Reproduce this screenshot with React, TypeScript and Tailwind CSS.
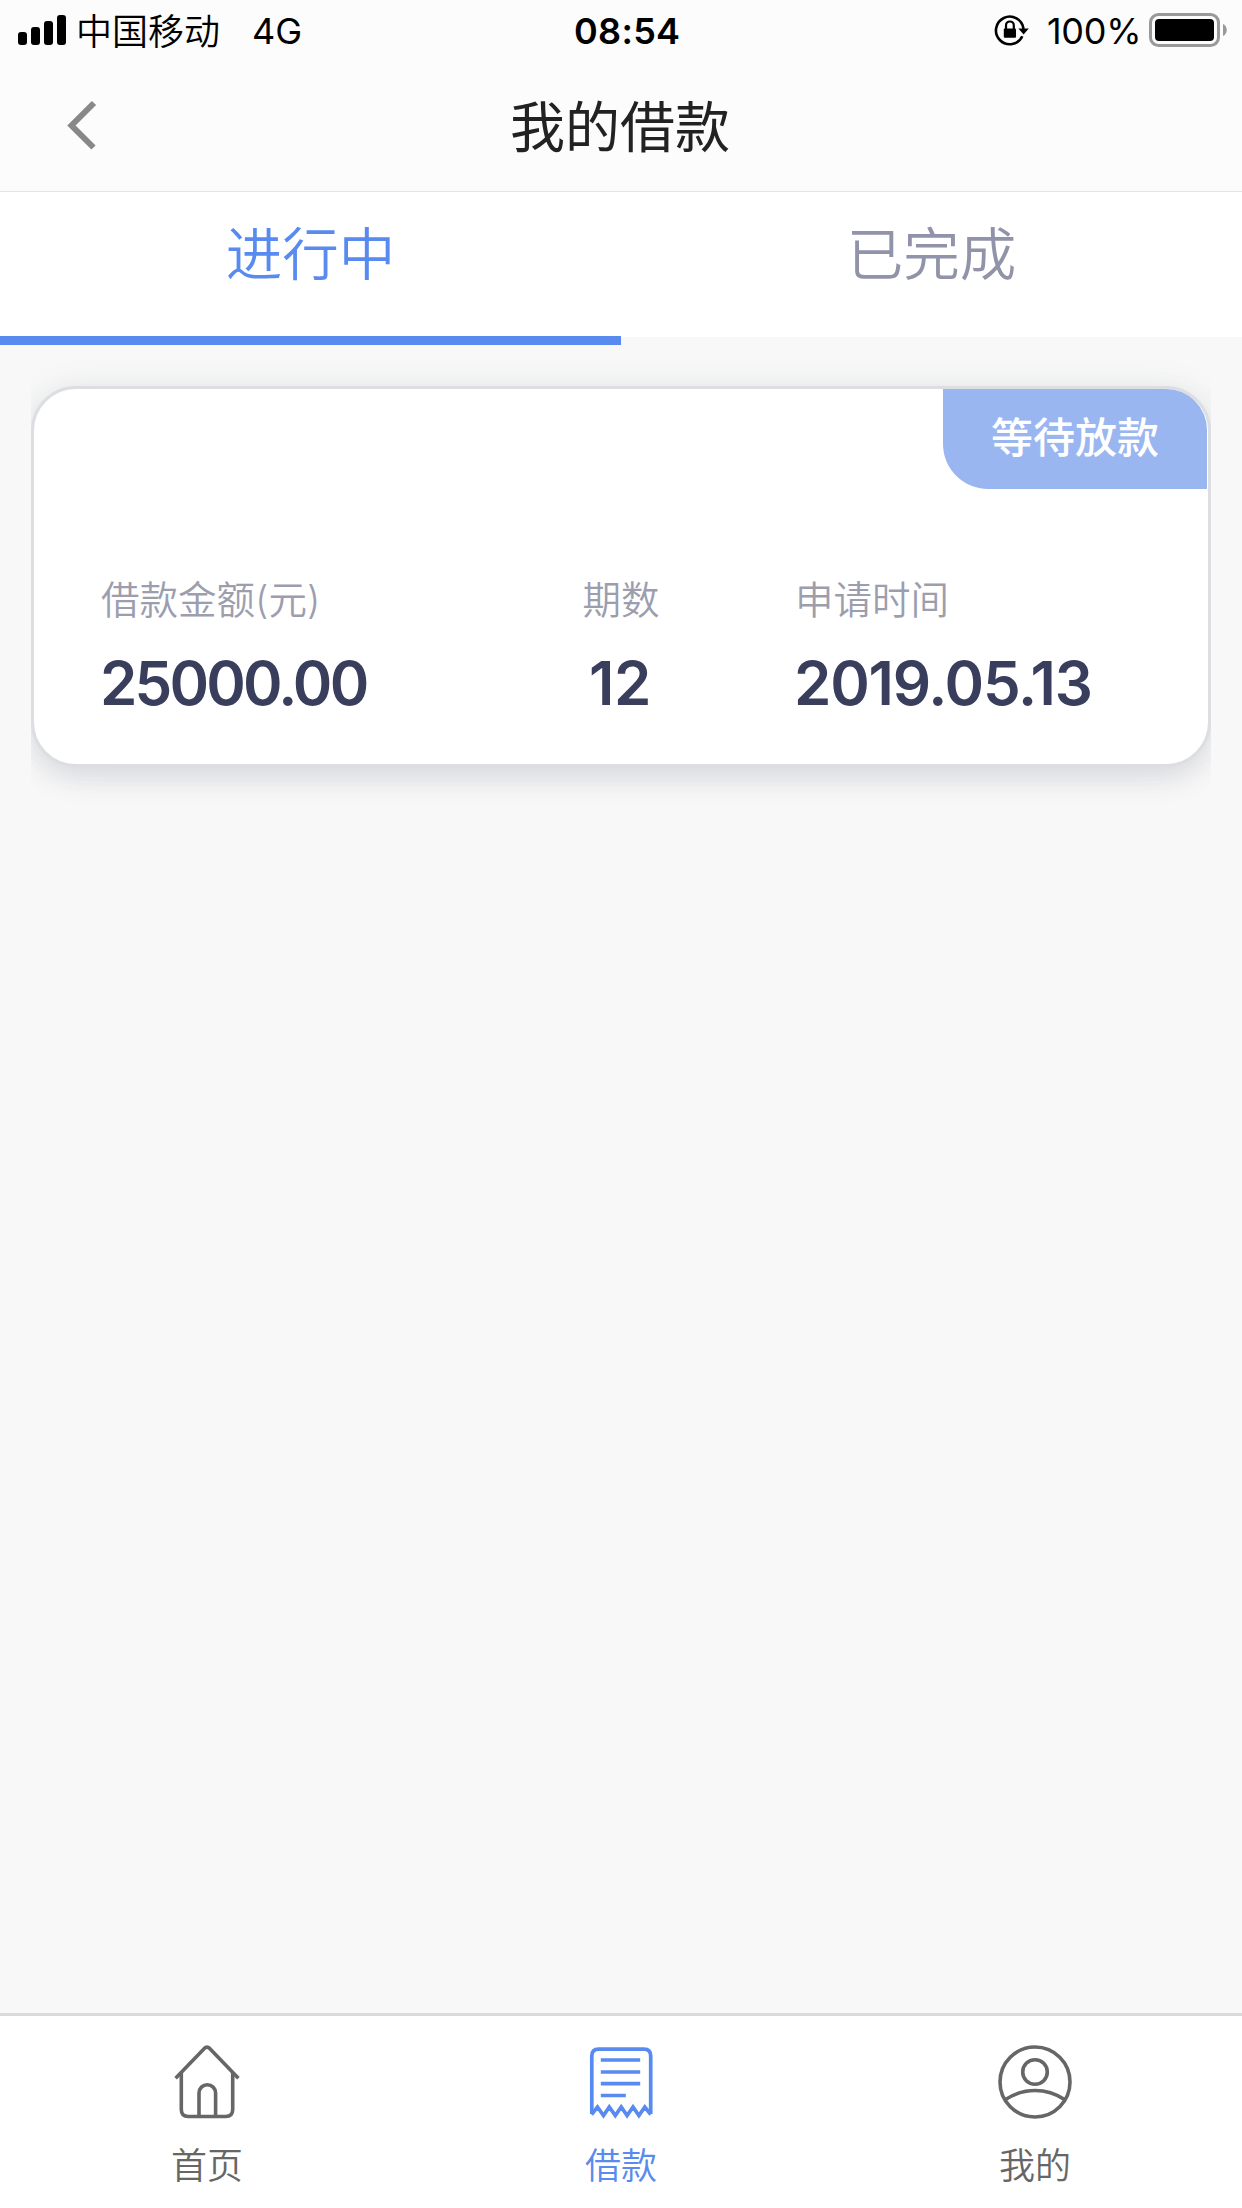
import React from 'react';

const loan = {
  status: '等待放款',
  amount: '25000.00',
  periods: '12',
  date: '2019.05.13',
};

const StatusBar: React.FC = () => (
  <div className="flex h-[62px] w-full items-center text-[36px] leading-[62px] text-black">
    <svg width="50" height="32" viewBox="0 0 50 32" className="ml-[17px] mt-[-2px]">
      <rect x="1" y="18" width="9" height="13" rx="3" />
      <rect x="14" y="13" width="9" height="18" rx="3" />
      <rect x="27" y="7" width="9" height="24" rx="3" />
      <rect x="40" y="1" width="9" height="30" rx="3" />
    </svg>
    <span className="ml-[9px] w-[144px] whitespace-nowrap pt-px font-[350]">中国移动</span>
    <span className="ml-[32px] w-[322px]">4G</span>
    <span className="w-[421px] font-semibold tracking-[0.3px]">08:54</span>
    <svg width="36" height="32" viewBox="0 0 36 32" fill="none" className="ml-[-1px] mt-[-2px]">
      <path d="M28.3 22.2A13.8 13.8 0 1 1 29.5 15" stroke="#000" strokeWidth="2.6" />
      <path d="M24.4 14.6h10.4l-5.2 5.8z" fill="#000" />
      <rect x="9.8" y="14.6" width="12.2" height="9.2" rx="1" fill="#000" />
      <path d="M12 15v-3.6a3.9 3.9 0 0 1 7.8 0V15" stroke="#000" strokeWidth="2.2" />
    </svg>
    <span className="ml-[17px] w-[102px] whitespace-nowrap tracking-[-0.3px]">100%</span>
    <svg width="80" height="36" viewBox="0 0 80 36" fill="none" className="mt-[-2px]">
      <rect x="1.5" y="2.5" width="68" height="31" rx="8" stroke="#999" strokeWidth="3" />
      <rect x="6" y="7" width="59" height="22" rx="4" fill="#000" />
      <path d="M74 12c5 2 5 10 0 12z" fill="#999" />
    </svg>
  </div>
);

const HomeIcon = () => (
  <svg width="78" height="78" viewBox="0 0 78 78" fill="none" stroke="#666" strokeWidth="3.6">
    <path d="M7.6 37.2 36.3 7.4q2.7-2.6 5.4 0l28.7 29.8" />
    <path d="M13.3 32v36.5q0 7 7 7h37.4q7 0 7-7V32" />
    <path d="M31 75.5V52a8.3 8.3 0 0 1 16.6 0v23.5" />
  </svg>
);

const BillIcon = () => (
  <svg width="78" height="78" viewBox="0 0 78 78" fill="none" stroke="#588aef" strokeWidth="3.7">
    <path d="M9.8 73V15q0-6.8 6.8-6.8h45.3q6.8 0 6.8 6.8v58" />
    <path d="M9.5 73.5 15.5 66l6 8.5L27.3 66l6 8.5 5.9-8.5 5.9 8.5L51 66l5.9 8.5L62.8 66l6 7.5" />
    <path d="M18.8 19h39.4M18.8 31h39.4M18.8 42.7h39.4M18.8 54.5h25" />
  </svg>
);

const UserIcon = () => (
  <svg width="78" height="78" viewBox="0 0 78 78" fill="none" stroke="#666" strokeWidth="3.6">
    <circle cx="39" cy="41" r="35" />
    <circle cx="39" cy="31" r="12.3" />
    <path d="M9.5 58.5Q23 49.5 39 49.5T68.5 58.5" />
  </svg>
);

const navItems = [
  { label: '首页', icon: <HomeIcon />, active: false },
  { label: '借款', icon: <BillIcon />, active: true },
  { label: '我的', icon: <UserIcon />, active: false },
];

const Label: React.FC<{ children: React.ReactNode }> = ({ children }) => (
  <p className="whitespace-nowrap text-[38.5px] font-[350] leading-[54px] tracking-normal text-[#9c9eae]">{children}</p>
);

const LoanCard: React.FC = () => (
  <div className="mx-[31px] h-[471px] overflow-hidden pt-[49px]">
    <div className="h-[381px] rounded-[45px] border-[3px] border-[#dcdee2] bg-white shadow-[0_12px_32px_-4px_rgba(56,62,92,0.16),0_0_36px_rgba(56,62,92,0.06)]">
      <div className="ml-auto mr-px h-[100px] w-[264px] rounded-tr-[41px] rounded-bl-[45px] bg-[#9ab6f1] text-center text-[42px] font-medium leading-[97px] text-white">
        {loan.status}
      </div>
      <div className="mt-[84px] flex pl-[67px] text-[60px] font-semibold leading-[72px] text-[#383e5c]">
        <div className="w-[440px]">
          <Label>借款金额(元)</Label>
          <p className="ml-[-1px] mt-[20px] tracking-[-2.8px]">{loan.amount}</p>
        </div>
        <div className="w-[160px] text-center">
          <Label>期数</Label>
          <p className="ml-[-2px] mt-[20px] tracking-[-0.4px]">{loan.periods}</p>
        </div>
        <div className="pl-[94px]">
          <Label>申请时间</Label>
          <p className="ml-[-1px] mt-[20px] tracking-[-1.2px]">{loan.date}</p>
        </div>
      </div>
    </div>
  </div>
);

const App: React.FC = () => {
  return (
    <div className="flex h-[2208px] w-[1242px] flex-col overflow-hidden bg-[#f8f8f8] font-['Inter','Noto_Sans_CJK_SC',sans-serif]">
      <header className="h-[192px] border-b border-[#e4e4e4] bg-[#fcfcfc]">
        <StatusBar />
        <div className="grid h-[129px] grid-cols-3 items-center">
          <svg width="34" height="52" viewBox="0 0 34 52" fill="none" className="ml-[64px] mt-[-4px]">
            <path d="M30 4 7.5 26.5 29.5 48.5" stroke="#888" strokeWidth="6" />
          </svg>
          <h1 className="ml-[-2px] text-center text-[55px] leading-[80px] text-[#222]">我的借款</h1>
        </div>
      </header>

      <div className="flex h-[145px] bg-white text-center text-[56.5px] font-[350] leading-[125px]">
        <div className="h-[153px] w-1/2 border-b-[9px] border-[#588aef] text-[#588aef]">进行中</div>
        <div className="w-1/2 text-[#9193aa]">已完成</div>
      </div>

      <main className="flex-1">
        <LoanCard />
      </main>

      <nav className="grid h-[195px] grid-cols-3 border-t-[3px] border-[#dadade] bg-white font-[350]">
        {navItems.map((item) => (
          <div key={item.label} className="flex flex-col items-center pt-[25px]">
            {item.icon}
            <span className={item.active ? 'mt-[22px] text-[36px] leading-[50px] text-[#588aef]' : 'mt-[22px] text-[36px] leading-[50px] text-[#666]'}>
              {item.label}
            </span>
          </div>
        ))}
      </nav>
    </div>
  );
};

export default App;
